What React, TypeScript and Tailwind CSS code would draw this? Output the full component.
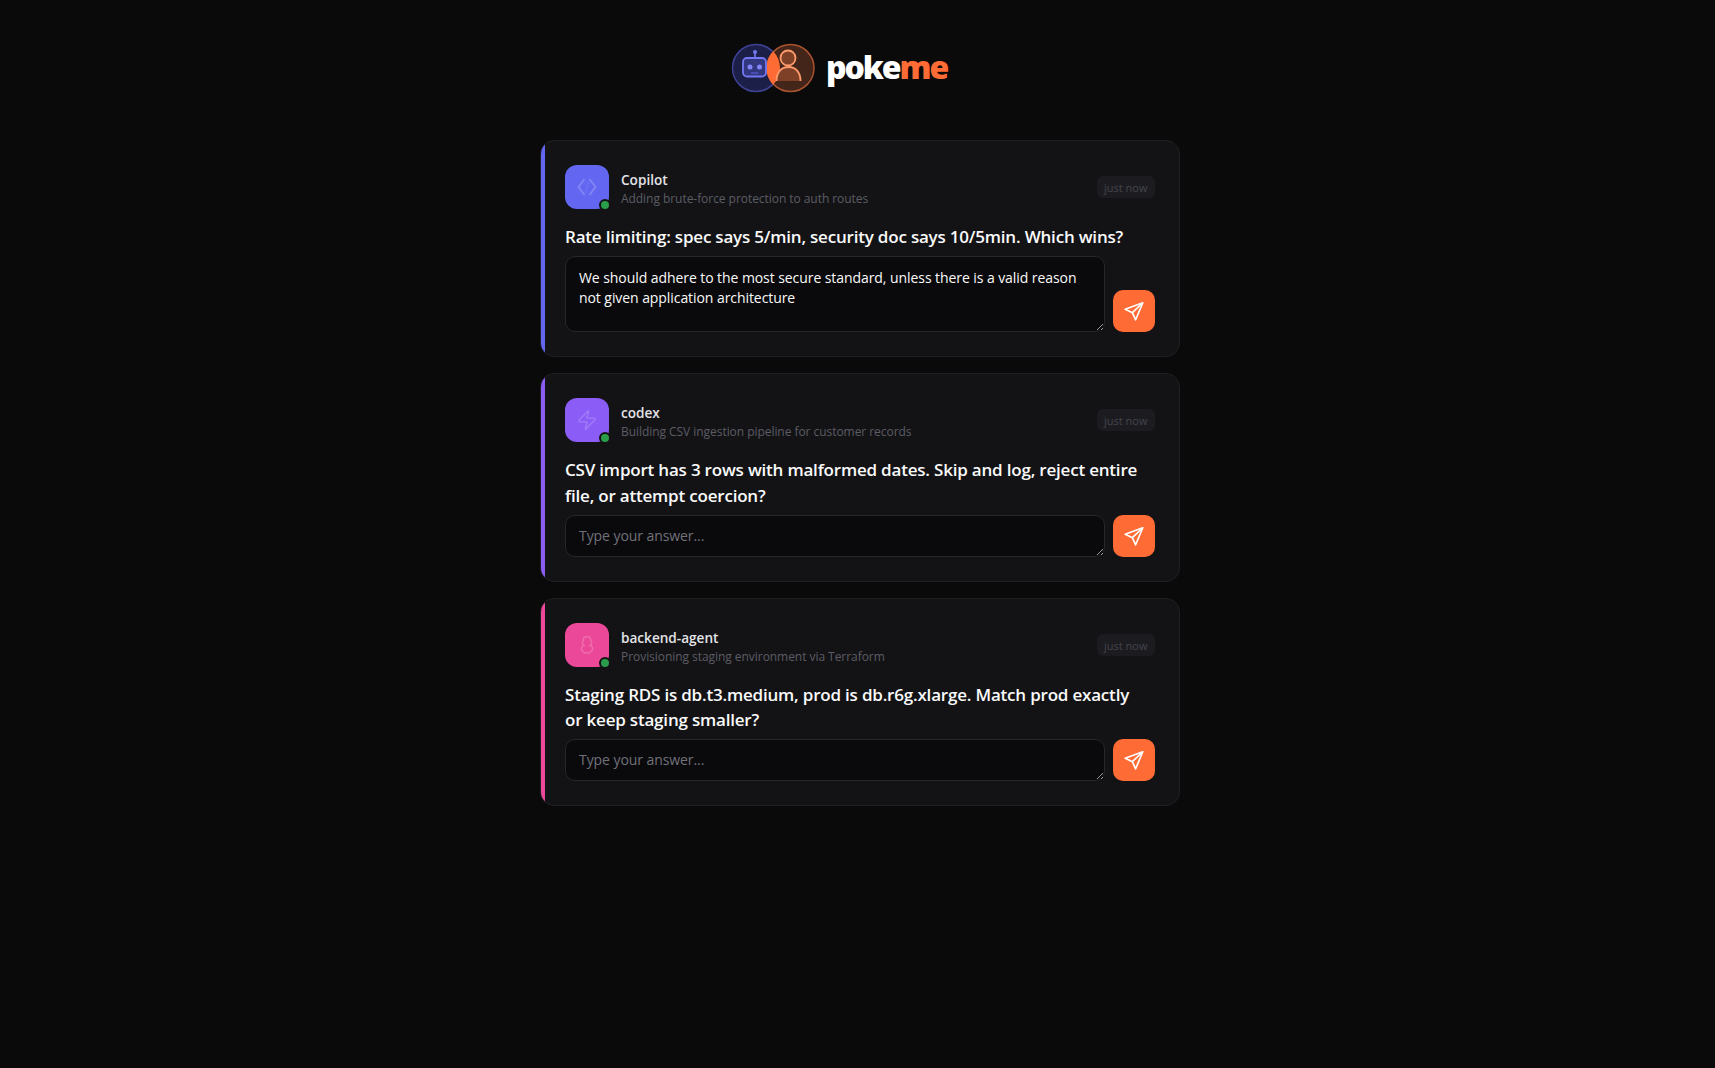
import { useState } from 'react'
import { Zap } from 'lucide-react'

interface Agent {
  name: string
  task: string
  question: string
  color: string
  icon: 'code' | 'zap' | 'hex'
  answer?: string
}

const AGENTS: Agent[] = [
  {
    name: 'Copilot',
    task: 'Adding brute-force protection to auth routes',
    question: 'Rate limiting: spec says 5/min, security doc says 10/5min. Which wins?',
    color: 'bg-[#6366f1]',
    icon: 'code',
    answer: 'We should adhere to the most secure standard, unless there is a valid reason not given application architecture',
  },
  {
    name: 'codex',
    task: 'Building CSV ingestion pipeline for customer records',
    question: 'CSV import has 3 rows with malformed dates. Skip and log, reject entire file, or attempt coercion?',
    color: 'bg-[#8b5cf6]',
    icon: 'zap',
  },
  {
    name: 'backend-agent',
    task: 'Provisioning staging environment via Terraform',
    question: 'Staging RDS is db.t3.medium, prod is db.r6g.xlarge. Match prod exactly or keep staging smaller?',
    color: 'bg-[#ec4899]',
    icon: 'hex',
  },
]

function Logo() {
  return (
    <svg width="84" height="50" viewBox="0 0 84 50" fill="none">
      <defs>
        <clipPath id="robot-circle">
          <circle cx="25" cy="25" r="24" />
        </clipPath>
      </defs>
      <circle cx="25" cy="25" r="23.5" fill="#1c1f47" stroke="#3f4396" strokeWidth="1.5" />
      <circle cx="59.5" cy="25" r="23.5" fill="#43251a" stroke="#a9532f" strokeWidth="1.5" />
      <circle cx="59.5" cy="25" r="24" fill="#ff6b35" clipPath="url(#robot-circle)" />
      <rect x="12" y="15" width="23" height="18.5" rx="4" fill="#33377e" stroke="#7478f2" strokeWidth="1.8" />
      <path d="M24 15V9" stroke="#7478f2" strokeWidth="1.6" />
      <circle cx="24" cy="9" r="2" fill="#7478f2" />
      <circle cx="19" cy="24" r="2.5" fill="#8185f8" />
      <circle cx="28.5" cy="24" r="2.5" fill="#8185f8" />
      <path d="M20 30h7.5" stroke="#5257c4" strokeWidth="1.5" />
      <circle cx="57" cy="15" r="7.5" fill="#7e4127" stroke="#ff9a6c" strokeWidth="1.8" />
      <path d="M45.5 38c0-9 5-14 12-14s12 5 12 14z" fill="#7e4127" />
      <path d="M45.5 38c0-9 5-14 12-14s12 5 12 14" stroke="#ff9a6c" strokeWidth="1.8" />
    </svg>
  )
}

function AgentIcon({ icon }: { icon: Agent['icon'] }) {
  if (icon === 'zap') return <Zap size={22} strokeWidth={1.5} className="text-white/20" />
  if (icon === 'code') {
    return (
      <svg width="24" height="24" viewBox="0 0 24 24" fill="none" stroke="currentColor" strokeWidth="2" className="text-white/20">
        <path d="M9.5 4 3.5 12l6 8" />
        <path d="M14.5 4l6 8-6 8" />
        <path d="M13.5 6l-3 12" strokeOpacity="0.4" strokeWidth="1.5" />
      </svg>
    )
  }
  return (
    <svg width="24" height="24" viewBox="0 0 24 24" fill="none" stroke="currentColor" strokeWidth="1.5" className="text-white/20">
      <path d="M12 3.5c2.3 0 3.7 1.3 3.7 3.5 0 .9.9 1.4.9 3 0 1.2-.7 2-1.5 2.5.9.3 2.4 1.2 2.4 2.7v1.3c0 .8-.5 1.2-1.2 1.6L14.5 20h-5l-1.800-1.900C7 17.700 6.500 17.300 6.500 16.500v-1.300c0-1.500 1.500-2.400 2.400-2.700-.8-.5-1.500-1.300-1.500-2.500 0-1.600.9-2.100.9-3 0-2.200 1.400-3.500 3.700-3.500z" />
    </svg>
  )
}

function AgentCard({ agent }: { agent: Agent }) {
  const [value, setValue] = useState(agent.answer ?? '')

  return (
    <div className="relative overflow-hidden rounded-[14px] border border-[#1f1f24] bg-[#131316] p-6">
      <span className={`absolute inset-y-0 left-0 w-1 ${agent.color}`} />
      <div className="flex items-center gap-3 mb-[15px]">
        <div className={`relative flex h-11 w-11 shrink-0 items-center justify-center rounded-xl ${agent.color}`}>
          <AgentIcon icon={agent.icon} />
          <span className="absolute -right-[2px] -bottom-[2px] h-3 w-3 rounded-full border-2 border-[#131316] bg-[#2a9d4a]" />
        </div>
        <div className="min-w-0 flex-1 pt-1">
          <div className="text-[13.6px] leading-5 font-semibold text-[#e4e4e7]">{agent.name}</div>
          <div className="text-[12px] leading-[18px] tracking-[-0.05px] text-[#5c5c64]">{agent.task}</div>
        </div>
        <span className="rounded-md bg-[#1c1c20] px-[7.5px] pt-1 pb-[2px] text-[11px] leading-4 text-[#44444c]">just now</span>
      </div>
      <p className="mb-[6.5px] pr-2 text-[17px] leading-[25.5px] font-semibold tracking-[-0.2px] text-[#fafafa]">{agent.question}</p>
      <div className="flex items-end gap-2">
        <textarea
          value={value}
          onChange={(e) => setValue(e.target.value)}
          placeholder="Type your answer..."
          className={`flex-1 rounded-[10px] border border-[#27272a] bg-[#0a0a0c] px-[13px] pb-[10px] text-[14px] leading-5 tracking-[-0.07px] text-[#fafafa] outline-none placeholder:text-[#71717a] ${agent.answer ? 'h-[76px] pt-[11px]' : 'h-[42px] pt-[10px]'}`}
        />
        <button className="flex h-[42px] w-[42px] shrink-0 items-center justify-center rounded-[10px] bg-[#ff6b35]">
          <svg width="22" height="22" viewBox="0 0 20 20" fill="none" stroke="white" strokeWidth="1.5" strokeLinejoin="round">
            <path d="M18 2.5 2 8.5l6.5 3 3 6.5z" />
            <path d="M18 2.5 8.5 11.5" />
          </svg>
        </button>
      </div>
    </div>
  )
}

export default function App() {
  return (
    <div className="min-h-screen bg-[#0a0a0a] font-['Open_Sans','Noto_Sans',sans-serif]">
      <header className="flex items-center gap-[11px] pt-[43px] pl-[731px] mb-[47px]">
        <Logo />
        <span className="pb-[2px] font-['Noto_Sans',sans-serif] text-[32px] leading-none font-black tracking-[-0.065em] text-white">
          poke<span className="text-[#ff6b35]">me</span>
        </span>
      </header>
      <main className="ml-[540px] flex w-[640px] flex-col gap-4">
        {AGENTS.map((agent) => (
          <AgentCard key={agent.name} agent={agent} />
        ))}
      </main>
    </div>
  )
}
